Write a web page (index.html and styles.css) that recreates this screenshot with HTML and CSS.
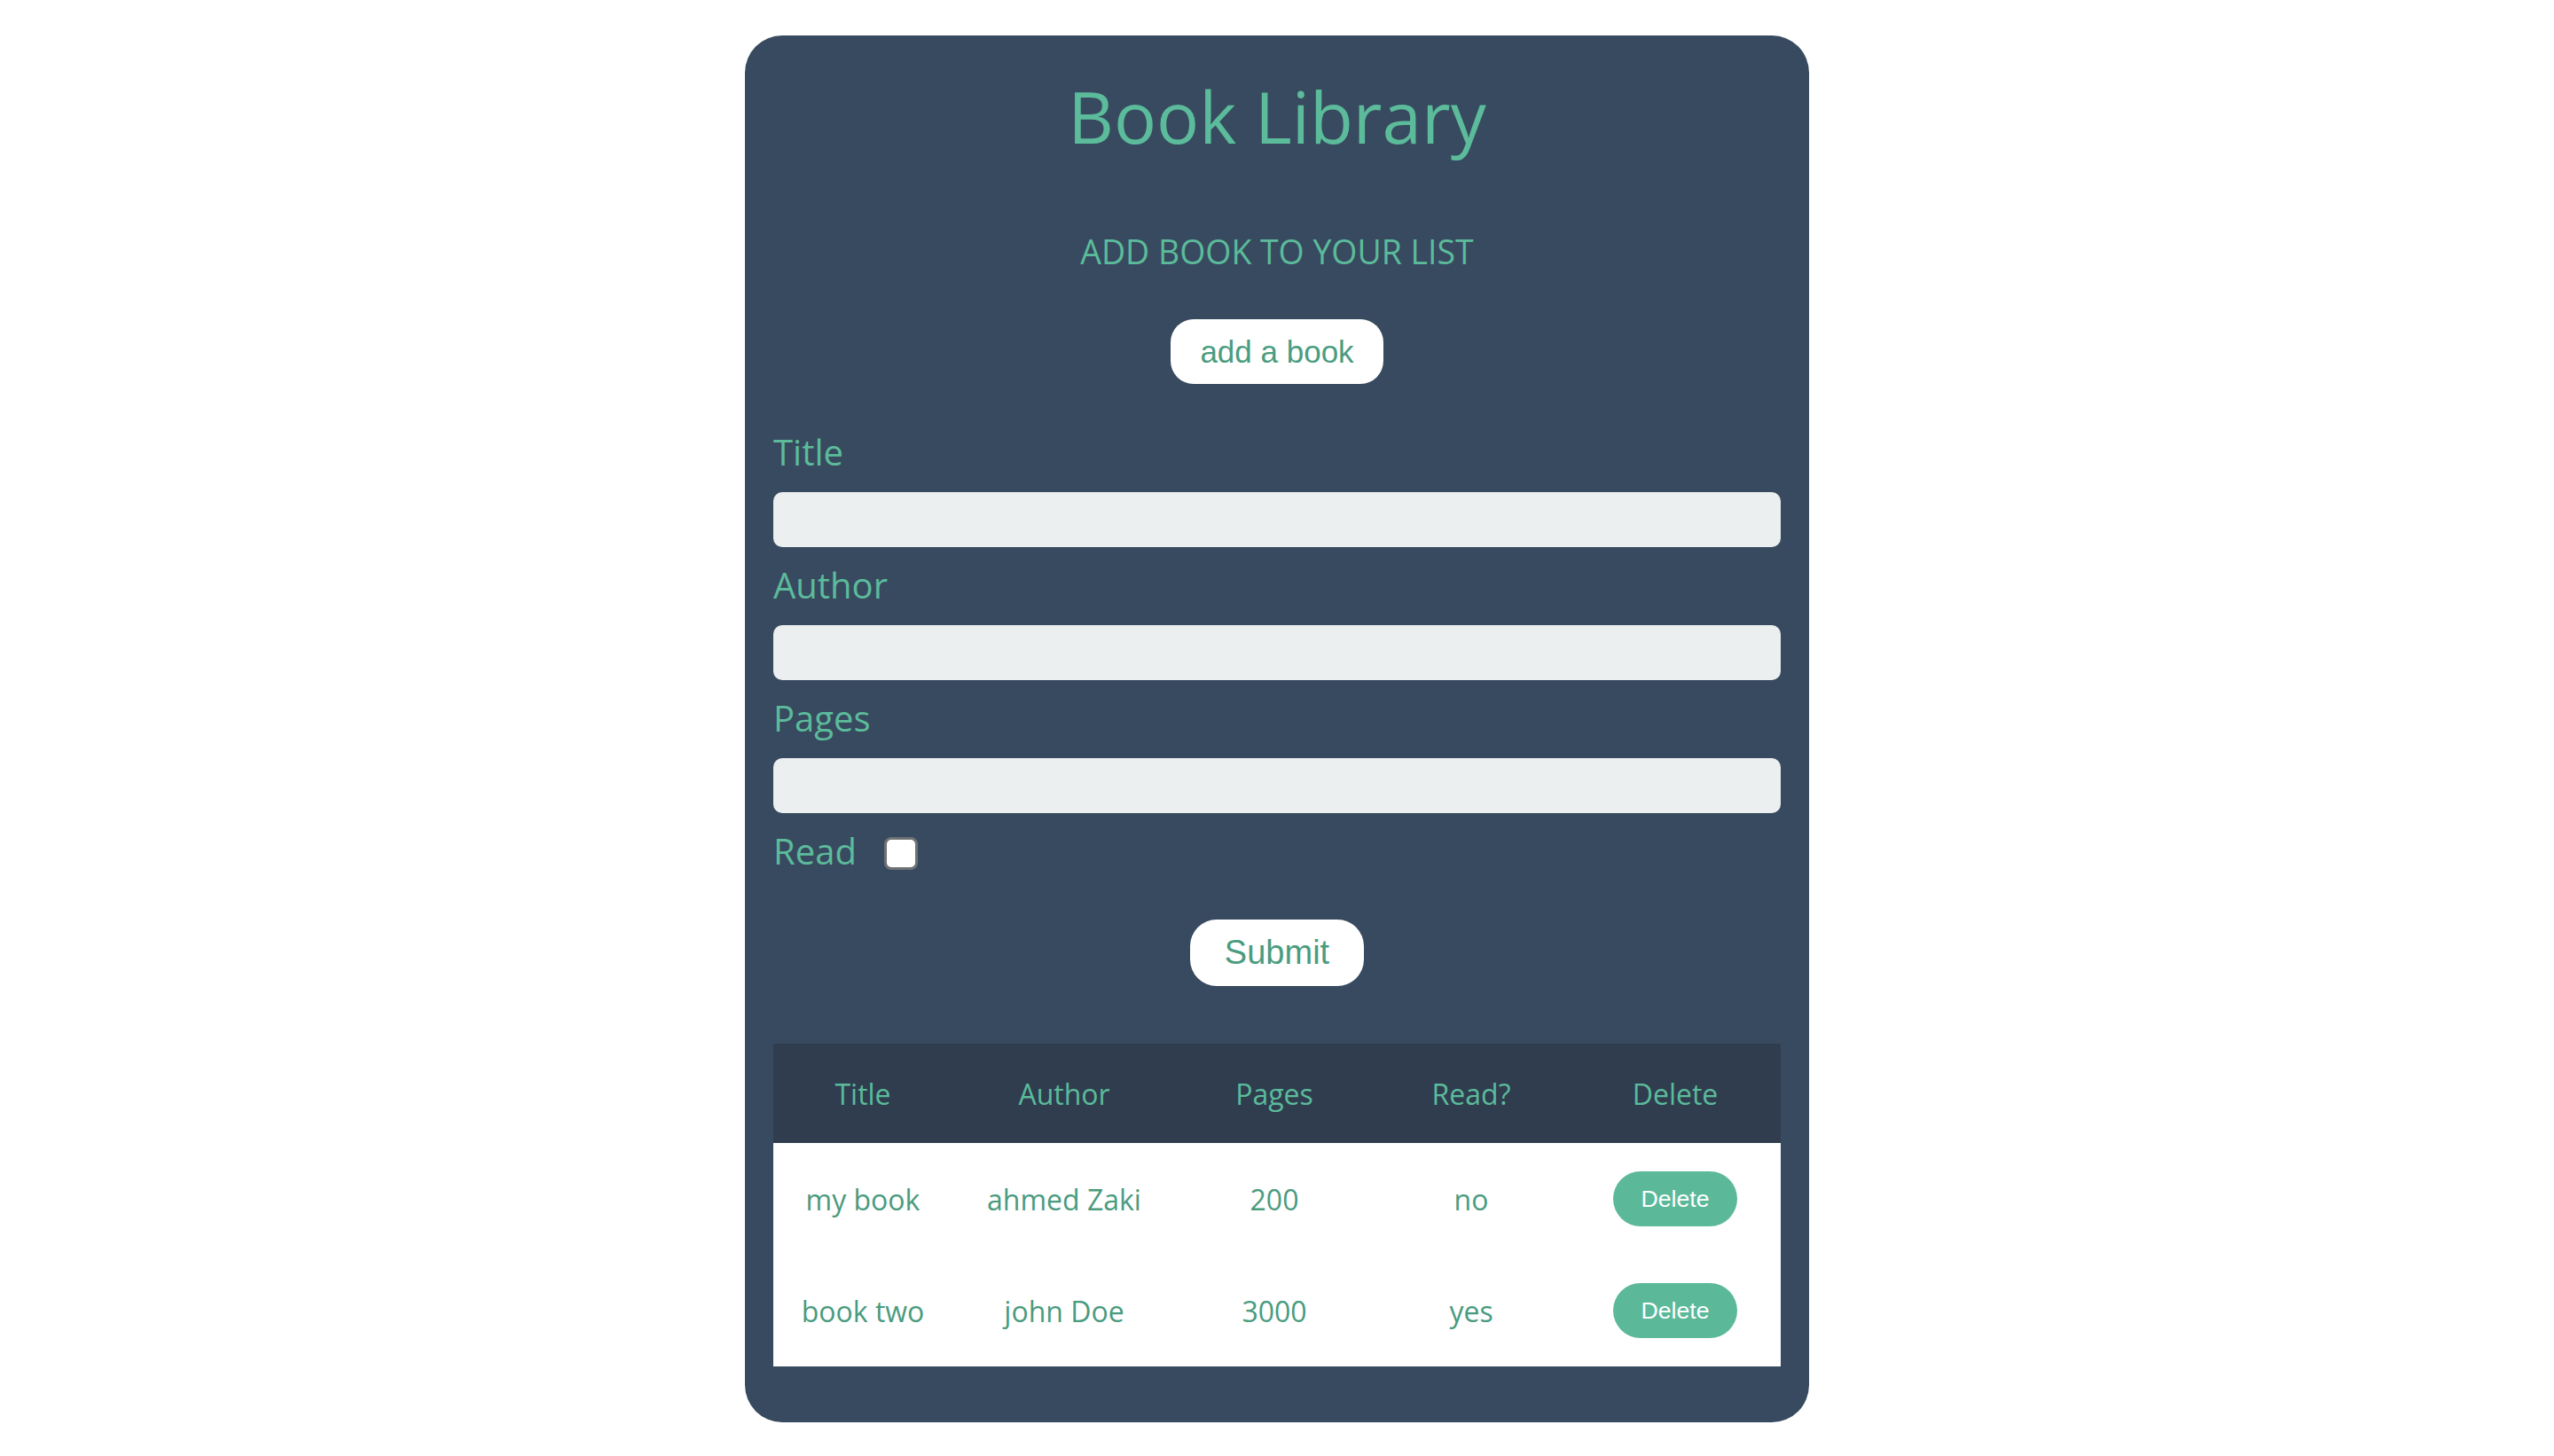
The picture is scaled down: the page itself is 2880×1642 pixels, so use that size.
FILE: index.html
```html
<!DOCTYPE html>
<html lang="en">
<head>
<meta charset="utf-8">
<title>Book Library</title>
<link rel="stylesheet" href="styles.css">
</head>
<body>
<main class="card">
  <h1 class="title">Book Library</h1>
  <h3 class="subtitle">ADD BOOK TO YOUR LIST</h3>
  <div class="center">
    <button class="btn btn-add" type="button">add a book</button>
  </div>
  <form class="form">
    <label class="label" for="title">Title</label>
    <input class="field" id="title" type="text">
    <label class="label" for="author">Author</label>
    <input class="field" id="author" type="text">
    <label class="label" for="pages">Pages</label>
    <input class="field" id="pages" type="text">
    <div class="read-row">
      <label class="label label-inline" for="read">Read</label>
      <input class="check" id="read" type="checkbox">
    </div>
    <div class="center">
      <button class="btn btn-submit" type="button">Submit</button>
    </div>
  </form>
  <table class="books">
    <colgroup>
      <col class="c1"><col class="c2"><col class="c3"><col class="c4"><col class="c5">
    </colgroup>
    <thead>
      <tr><th>Title</th><th>Author</th><th>Pages</th><th>Read?</th><th>Delete</th></tr>
    </thead>
    <tbody>
      <tr><td>my book</td><td>ahmed Zaki</td><td>200</td><td>no</td><td><button class="btn-del" type="button">Delete</button></td></tr>
      <tr><td>book two</td><td>john Doe</td><td>3000</td><td>yes</td><td><button class="btn-del" type="button">Delete</button></td></tr>
    </tbody>
  </table>
</main>
</body>
</html>
```
FILE: styles.css
```css
* { box-sizing: border-box; }
html, body { margin: 0; padding: 0; background: #ffffff; }
body { font-family: "Open Sans", "Liberation Sans", sans-serif; }

.card {
  width: 1200px;
  margin: 40px auto 0;
  background: #384a5f;
  border-radius: 42px;
  padding: 36px 32px 63px;
}

.title {
  margin: 0;
  font-size: 80px;
  line-height: 110px;
  font-weight: 400;
  color: #5bbb9b;
  text-align: center;
}

.subtitle {
  margin: 72px 0 0;
  font-size: 37.44px;
  line-height: 51px;
  font-weight: 400;
  color: #5bbb9b;
  text-align: center;
}

.center { display: flex; justify-content: center; }

.btn {
  background: #ffffff;
  border: none;
  color: #4a9c80;
  font-family: "Liberation Sans", Arial, sans-serif;
  padding: 0;
  cursor: pointer;
}
.btn-add {
  margin-top: 51px;
  width: 240px;
  height: 73px;
  border-radius: 26px;
  font-size: 35px;
}
.btn-submit {
  margin-top: 50px;
  width: 196px;
  height: 75px;
  border-radius: 30px;
  font-size: 38px;
}

.form { display: flex; flex-direction: column; margin-top: 50px; }

.label {
  display: block;
  font-size: 40px;
  line-height: 54px;
  color: #5bbb9b;
  margin-bottom: 18px;
}
.label-inline { margin-bottom: 0; }

.field {
  display: block;
  width: 100%;
  height: 62px;
  border: none;
  border-radius: 10px;
  background: #ebeff0;
  margin: 0 0 16px;
  font-size: 32px;
  padding: 0 16px;
}

.read-row { display: flex; align-items: center; }

.check {
  appearance: none;
  -webkit-appearance: none;
  margin: 4px 0 0 31px;
  width: 38px;
  height: 37px;
  background: #ffffff;
  border: 3px solid #6f7275;
  border-radius: 8px;
}

.books {
  width: 1136px;
  margin-top: 65px;
  border-collapse: collapse;
  table-layout: fixed;
  font-size: 32px;
}
.c1 { width: 202px; }
.c2 { width: 252px; }
.c3 { width: 222px; }
.c4 { width: 222px; }
.c5 { width: 238px; }

.books th {
  background: #2f3d4f;
  color: #5bbb9b;
  font-weight: 400;
  height: 112px;
  padding: 0;
  text-align: center;
  vertical-align: middle;
}
.books td {
  background: #ffffff;
  color: #4a9b7e;
  height: 126px;
  padding: 0;
  text-align: center;
  vertical-align: middle;
}

.btn-del {
  width: 140px;
  height: 62px;
  border: none;
  border-radius: 31px;
  background: #5bb99a;
  color: #ffffff;
  font-family: "Liberation Sans", Arial, sans-serif;
  font-size: 26.67px;
  padding: 0;
  vertical-align: middle;
}
```
